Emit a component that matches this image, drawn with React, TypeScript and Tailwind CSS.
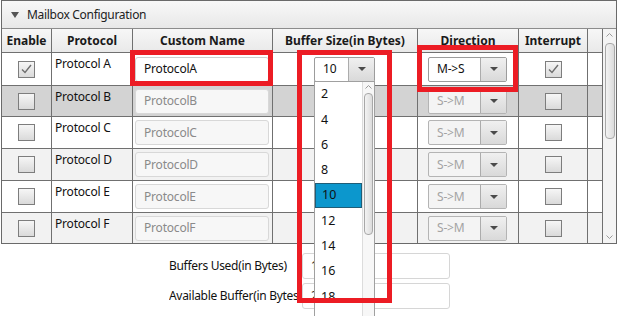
import React from "react";

const font = { fontFamily: '"Noto Sans", "Segoe UI", sans-serif' };

const grid = "grid grid-cols-[50px_81px_140px_145px_101px_69px_15px]";
const cell = "border-r border-[#707070]";

const rows = [
  { name: "Protocol A", h: "h-[33px] border-b", bg: "bg-white", on: true },
  { name: "Protocol B", h: "h-[31px] border-b", bg: "bg-[#d3d3d3]", on: false },
  { name: "Protocol C", h: "h-[32px] border-b", bg: "bg-white", on: false },
  { name: "Protocol D", h: "h-[32px] border-b", bg: "bg-[#f2f2f2]", on: false },
  { name: "Protocol E", h: "h-[32px] border-b", bg: "bg-white", on: false },
  { name: "Protocol F", h: "h-[30px]", bg: "bg-[#f2f2f2]", on: false },
];

const Arrow = () => (
  <svg width="8" height="4" viewBox="0 0 8 4">
    <path d="M0 0h8L4 4z" fill="#4a4a4a" />
  </svg>
);

const Check = ({ checked }: { checked: boolean }) => (
  <div className="w-[17px] h-[17px] border border-[#7d7d7d] bg-gradient-to-b from-[#f6f6f6] to-[#dadada] flex items-center justify-center">
    {checked && (
      <svg width="11" height="10" viewBox="0 0 11 10">
        <path d="M1 5.5l3 3L10 1" fill="none" stroke="#6e6e6e" strokeWidth="1.4" />
      </svg>
    )}
  </div>
);

const Combo = ({ text, enabled, w, split }: { text: string; enabled: boolean; w: string; split: string }) => (
  <div className={`${w} h-[25px] flex border rounded-[2px] ${enabled ? "border-[#9c9c9c] bg-white" : "border-[#b4b4b4] bg-[#f4f4f4]"}`}>
    <div className={`${split} flex items-center pl-[8px] text-[12px] ${enabled ? "text-[#111]" : "text-[#a3a3a3]"}`}>{text}</div>
    <div className="flex-1 border-l border-[#acacac] bg-gradient-to-b from-[#f0f0f0] to-[#d9d9d9] flex items-center justify-center">
      <Arrow />
    </div>
  </div>
);

const Chevron = ({ up }: { up: boolean }) => (
  <svg width="7" height="4" viewBox="0 0 7 4">
    <path d={up ? "M0.5 3.5L3.5 0.5L6.5 3.5" : "M0.5 0.5L3.5 3.5L6.5 0.5"} fill="none" stroke="#9a9a9a" strokeWidth="1" />
  </svg>
);

export default function App() {
  return (
    <div className="relative w-[618px] h-[316px] overflow-hidden bg-white text-[#111]" style={font}>
      <div className="ml-[1px] w-[616px] border border-[#6a6a6a]">
        {/* title bar */}
        <div className="h-[28px] border-b border-[#8c8c8c] bg-gradient-to-b from-[#f8f8f8] to-[#e8e8e8] flex items-center pl-[9px] gap-[8px]">
          <svg width="8" height="6" viewBox="0 0 8 6">
            <path d="M0 0h8L4 6z" fill="#555" />
          </svg>
          <span className="text-[12px] tracking-[-0.3px] text-[#222]">Mailbox Configuration</span>
        </div>

        <div className="flex">
          <div className="w-[601px]">
            <div className={`${grid} h-[24px] border-b border-[#707070] bg-gradient-to-b from-[#f7f7f7] to-[#e9e9e9] text-[12px] font-bold text-[#1a1a1a]`}>
              {["Enable", "Protocol", "Custom Name", "Buffer Size(in Bytes)", "Direction", "Interrupt", ""].map((t) => (
                <div key={t} className={`${cell} flex items-center justify-center whitespace-nowrap`}>{t}</div>
              ))}
            </div>
            {rows.map((r) => (
              <div key={r.name} className={`${grid} ${r.h} ${r.bg} border-[#707070] text-[12px] tracking-[-0.2px]`}>
                <div className={`${cell} flex items-center justify-center`}>
                  <Check checked={r.on} />
                </div>
                <div className={`${cell} pl-[3px] pt-[3px] leading-[16px]`}>{r.name}</div>
                <div className={`${cell} flex items-center pl-[2px]`}>
                  <div className={`w-[134px] h-[25px] rounded-[3px] border flex items-center pl-[8px] ${r.on ? "bg-white border-[#cfcfcf] text-[#111]" : "bg-[#f7f7f7] border-[#d8d8d8] text-[#8a8a8a]"}`}>
                    {r.name.replace(" ", "")}
                  </div>
                </div>
                <div className={`${cell} flex items-center pl-[41px]`}>
                  {r.on && <Combo text="10" enabled w="w-[61px]" split="w-[33px]" />}
                </div>
                <div className={`${cell} flex items-center pl-[10px]`}>
                  <Combo text={r.on ? "M->S" : "S->M"} enabled={r.on} w="w-[79px]" split="w-[51px]" />
                </div>
                <div className={`${cell} flex items-center justify-center`}>
                  <Check checked={r.on} />
                </div>
                <div className={`${cell}`} />
              </div>
            ))}
          </div>
          {/* table scrollbar */}
          <div className="w-[13px] bg-[#f4f4f4] flex flex-col items-center pt-[4px] pb-[4px]">
            <Chevron up />
            <div className="mt-[6px] w-[10px] h-[96px] rounded-[4px] border border-[#a8a8a8] bg-gradient-to-r from-[#f3f3f3] to-[#dcdcdc]" />
            <div className="flex-1" />
            <Chevron up={false} />
          </div>
        </div>
      </div>

      {/* buffer summary */}
      <div className="mt-[9px] pl-[169px] grid grid-cols-[133px_148px] gap-y-[4px] text-[12px] tracking-[-0.3px]">
        <div className="h-[26px] flex items-center whitespace-nowrap overflow-hidden">Buffers Used(in Bytes)</div>
        <div className="h-[26px] rounded-[3px] border border-[#d6d6d6] flex items-center pl-[8px]">1</div>
        <div className="h-[26px] flex items-center whitespace-nowrap overflow-hidden">Available Buffer(in Bytes)</div>
        <div className="h-[26px] rounded-[3px] border border-[#d6d6d6] flex items-center pl-[8px]">2</div>
      </div>

      {/* open dropdown list */}
      <div className="absolute left-[314px] top-[81px] w-[61px] h-[250px] border border-[#a0a0a0] bg-white flex">
        <div className="w-[47px] text-[12.5px]">
          {["2", "4", "6", "8", "10", "12", "14", "16", "18"].map((v) => (
            <div
              key={v}
              className={`h-[25.3px] flex items-center pl-[6px] ${v === "10" ? "bg-[#0c97cd] border border-[#1f5d77] pl-[5px]" : ""}`}
            >
              {v}
            </div>
          ))}
        </div>
        <div className="w-[12px] border-l border-[#dcdcdc] bg-[#f7f7f7] flex flex-col items-center pt-[3px]">
          <Chevron up />
          <div className="mt-[4px] w-[9px] h-[142px] rounded-[4px] border border-[#a8a8a8] bg-gradient-to-r from-[#f3f3f3] to-[#dcdcdc]" />
        </div>
      </div>

      {/* red annotation boxes */}
      <div className="absolute left-[130px] top-[50px] w-[143px] h-[36px] border-[5px] border-[#ec1c24]" />
      <div className="absolute left-[297px] top-[50px] w-[95px] h-[253px] border-[5px] border-[#ec1c24]" />
      <div className="absolute left-[417px] top-[45px] w-[101px] h-[47px] border-[5px] border-[#ec1c24]" />
    </div>
  );
}
